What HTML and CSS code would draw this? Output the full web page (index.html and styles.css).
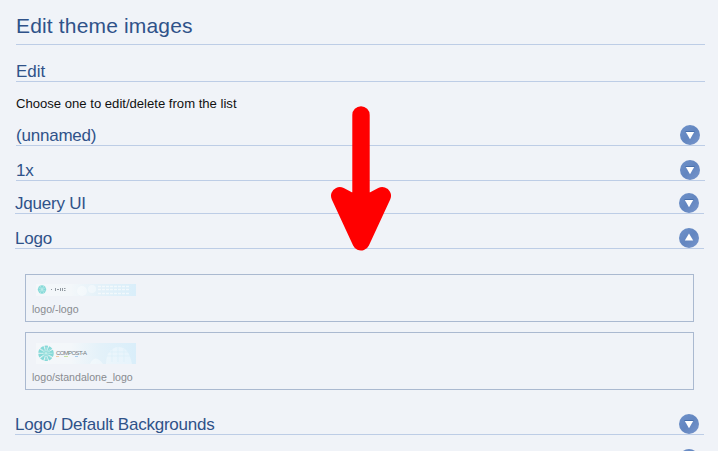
FILE: index.html
```
<!DOCTYPE html>
<html lang="en">
<head>
<meta charset="utf-8">
<title>Edit theme images</title>
<link rel="stylesheet" href="styles.css">
</head>
<body>
<svg class="defs" width="0" height="0" aria-hidden="true">
  <defs>
    <linearGradient id="disc" x1="0" y1="0" x2="1" y2="1"><stop offset="0" stop-color="#6f92ca"/><stop offset=".5" stop-color="#6386c0"/><stop offset="1" stop-color="#7896cc"/></linearGradient>
    <linearGradient id="sky"><stop offset="0" stop-color="#f4f7fa"/><stop offset=".35" stop-color="#f3f7fa"/><stop offset=".65" stop-color="#e3f1f9"/><stop offset="1" stop-color="#d9eefa"/></linearGradient>
    <symbol id="down" viewBox="0 0 20 20"><circle cx="10" cy="10" r="10" fill="url(#disc)"/><path d="M5.5 6.5h9" stroke="#4770ad"/><path d="M5.8 7h8.4L10 14.3z" fill="#fff"/></symbol>
    <symbol id="up" viewBox="0 0 20 20"><circle cx="10" cy="10" r="10" fill="url(#disc)"/><path d="M5.8 12.5h8.4L10 5.5z" fill="#fff"/></symbol>
  </defs>
</svg>
<main class="page">
  <h1 class="title">Edit theme images</h1>
  <h2 class="section">Edit</h2>
  <p class="intro">Choose one to edit/delete from the list</p>
  <div class="row first"><span class="label">(unnamed)</span><svg class="toggle"><use href="#down"/></svg></div>
  <div class="row"><span class="label">1x</span><svg class="toggle"><use href="#down"/></svg></div>
  <div class="row shifted tight"><span class="label">Jquery UI</span><svg class="toggle"><use href="#down"/></svg></div>
  <div class="row shifted"><span class="label">Logo</span><svg class="toggle"><use href="#up"/></svg></div>
  <div class="cards">
    <div class="card">
      <svg class="thumb" width="100" height="12" viewBox="0 0 100 12">
        <rect width="100" height="12" fill="url(#sky)"/>
        <g fill="#fff" opacity=".4"><circle cx="46" cy="7" r="5"/><circle cx="56" cy="5" r="4"/></g>
        <path d="M62 2.5h32M62 5.5h32M62 9.5h32" stroke="#fff" stroke-width="1.5" stroke-dasharray="3 1" opacity=".6"/>
        <circle cx="6" cy="5.5" r="4.2" fill="#86d9d8"/>
        <path d="M2 3.5l8 4M4 9.5l4-8M2 7.5l8-4M4 1.5l4 8" stroke="#c6eeec" stroke-width=".6"/>
        <path d="M15 5.5h1M19.5 4v3M21 5.5h2M24.5 4v3M26.5 4v3M28 4.5h1.5M28 6.5h1.5" stroke="#667078" stroke-width=".7"/>
      </svg>
      <span class="name">logo/-logo</span>
    </div>
    <div class="card tall">
      <svg class="thumb" width="100" height="21" viewBox="0 0 100 21">
        <rect width="100" height="21" fill="url(#sky)"/>
        <path d="M70 21c0-10 4-16 12-17 9 0 12 7 14 17z" fill="#fff" opacity=".35"/>
        <path d="M54 21q5-11 13 0z" fill="#fff" opacity=".4"/>
        <g stroke="#d8eef9" stroke-width=".6"><path d="M73 9h19M71 13h23M76 6v13M82 4v15M88 6v13"/></g>
        <circle cx="10" cy="10.3" r="5.5" fill="none" stroke="#86d9d8" stroke-width="4.5" stroke-dasharray="2.7 .75"/>
        <circle cx="10" cy="10.3" r="3" fill="#86d9d8"/>
        <path d="M10 4v13M3.5 10.3h13M5.5 5.8l9 9M14.5 5.8l-9 9" stroke="#d2f1ef" stroke-width=".6"/>
        <text class="wordmark" x="20" y="12.4" textLength="31">COMPOST-A</text>
        <path d="M20 13.5h3" stroke="#f2cda4"/><path d="M28 13.5h4" stroke="#c6e2a1"/><path d="M39 13.5h3" stroke="#a4ccec"/>
      </svg>
      <span class="name">logo/standalone_logo</span>
    </div>
  </div>
  <div class="row shifted after"><span class="label">Logo/ Default Backgrounds</span><svg class="toggle"><use href="#down"/></svg></div>
  <div class="row shifted"><span class="label"></span><svg class="toggle"><use href="#down"/></svg></div>
</main>
<svg class="arrow" width="62" height="146" viewBox="330 106 62 146" aria-hidden="true">
  <path d="M361 115V215M339.7 195.8L361 207l21.3-11.2L361 241.8z" fill="red" stroke="red" stroke-width="17.4" stroke-linecap="round" stroke-linejoin="round"/>
</svg>
</body>
</html>
```
FILE: styles.css
```
* { box-sizing: border-box; }
html { overflow: hidden; }
body {
  margin: 0;
  height: 451px;
  overflow: hidden;
  position: relative;
  background: #f0f3f8;
  color: #111;
  font-family: "Liberation Sans", Arial, sans-serif;
}
.defs { position: absolute; }
.page { padding: 0 13px 0 16px; }
.title, .section, .row {
  margin: 0;
  border-bottom: 1px solid #bdcde6;
  color: #2f5289;
  font-weight: 400;
}
.title {
  height: 45px;
  padding-top: 14px;
  font-size: 21px;
  line-height: 24px;
  letter-spacing: .16px;
}
.section {
  height: 37px;
  padding-top: 17px;
  font-size: 17px;
  line-height: 20px;
}
.intro {
  margin: 0;
  padding-top: 14px;
  height: 29px;
  font-size: 13.1px;
  line-height: 16px;
}
.row {
  height: 35px;
  display: flex;
  align-items: flex-end;
  justify-content: space-between;
  padding-right: 5px;
  font-size: 17px;
  letter-spacing: -.22px;
  line-height: 18px;
}
.shifted { margin: 0 1px 0 -1px; }
.tight { height: 33px; }
.toggle { width: 20px; height: 20px; flex: none; }
.cards {
  display: grid;
  gap: 10px;
  padding: 25px 11px 0 9px;
}
.card {
  height: 48px;
  display: flex;
  flex-direction: column;
  align-items: flex-start;
  justify-content: space-between;
  padding: 9px 6px 5px;
  border: 1px solid #aab9d0;
}
.tall { height: 58px; padding-top: 10px; }
.thumb { margin-left: 4px; }
.name {
  color: #888b90;
  font-size: 10.6px;
  line-height: 13px;
}
.wordmark {
  fill: #70797f;
  font-family: "Liberation Sans", Arial, sans-serif;
  font-size: 6px;
}
.after { height: 45px; }
.arrow { position: absolute; left: 330px; top: 106px; }
```
